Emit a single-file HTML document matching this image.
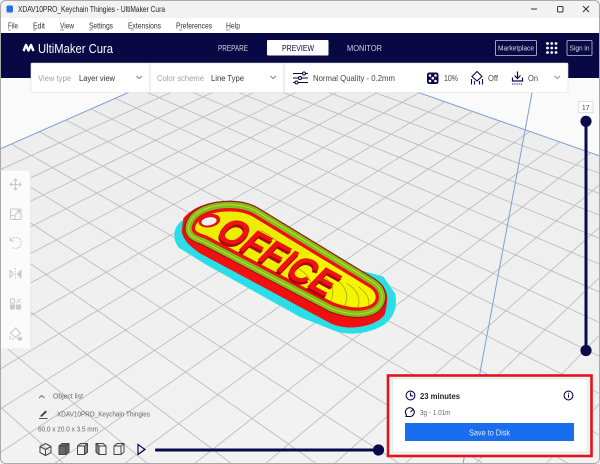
<!DOCTYPE html>
<html><head><meta charset="utf-8"><style>
html,body{margin:0;padding:0;width:600px;height:464px;overflow:hidden;background:#fff}
svg{display:block;overflow:hidden}
text{font-family:"Liberation Sans",sans-serif}
</style></head><body>
<svg xmlns="http://www.w3.org/2000/svg" width="600" height="464" viewBox="0 0 600 464">
<defs>
<clipPath id="bed"><polygon points="257,36 600,156 600,464 0,464 0,149"/></clipPath>
<clipPath id="inner"><path d="M135,115 C140,80 190,64 240,64 C265,64 285,68 305,78 L660,294 C685,312 680,335 660,345 C630,358 590,352 550,337 L170,137 C150,130 135,125 135,115 Z"/></clipPath>
<linearGradient id="bedg" x1="0" y1="0" x2="0" y2="1"><stop offset="0" stop-color="#ececec"/><stop offset="1" stop-color="#f2f2f2"/></linearGradient>
<pattern id="dots" width="7" height="7" patternUnits="userSpaceOnUse"><rect width="7" height="7" fill="#f5f500"/><circle cx="2" cy="2" r="1" fill="#b4b414"/><circle cx="5.5" cy="5.5" r="1" fill="#b4b414"/></pattern>
<pattern id="cy" width="8" height="8" patternUnits="userSpaceOnUse"><rect width="8" height="8" fill="#22dde6"/><circle cx="2" cy="2" r="1.2" fill="#8ceef0"/></pattern>
</defs>
<rect width="600" height="464" fill="#fff"/>
<!-- viewport -->
<rect x="0" y="78" width="600" height="386" fill="#fafafa"/>
<polygon points="257,36 600,156 600,464 0,464 0,149" fill="url(#bedg)"/>
<g clip-path="url(#bed)" stroke="#bcbcbc" stroke-width=".85" fill="none">
<g>
<line x1="-834" y1="-341" x2="1410" y2="464"/><line x1="-834" y1="-341" x2="1325" y2="464"/><line x1="-834" y1="-341" x2="1241" y2="464"/><line x1="-834" y1="-341" x2="1158" y2="464"/><line x1="-834" y1="-341" x2="1073" y2="464"/><line x1="-834" y1="-341" x2="989" y2="464"/><line x1="-834" y1="-341" x2="905" y2="464"/><line x1="-834" y1="-341" x2="821" y2="464"/><line x1="-834" y1="-341" x2="737" y2="464"/><line x1="-834" y1="-341" x2="653" y2="464"/><line x1="-834" y1="-341" x2="569" y2="464"/><line x1="-834" y1="-341" x2="484" y2="464"/><line x1="-834" y1="-341" x2="400" y2="464"/><line x1="-834" y1="-341" x2="317" y2="464"/><line x1="-834" y1="-341" x2="232" y2="464"/><line x1="-834" y1="-341" x2="148" y2="464"/><line x1="-834" y1="-341" x2="64" y2="464"/><line x1="-834" y1="-341" x2="-20" y2="464"/>
</g>
<g>
<line x1="1349" y1="-441" x2="-650" y2="464"/><line x1="1349" y1="-441" x2="-579" y2="464"/><line x1="1349" y1="-441" x2="-509" y2="464"/><line x1="1349" y1="-441" x2="-438" y2="464"/><line x1="1349" y1="-441" x2="-369" y2="464"/><line x1="1349" y1="-441" x2="-299" y2="464"/><line x1="1349" y1="-441" x2="-228" y2="464"/><line x1="1349" y1="-441" x2="-158" y2="464"/><line x1="1349" y1="-441" x2="-87" y2="464"/><line x1="1349" y1="-441" x2="-17" y2="464"/><line x1="1349" y1="-441" x2="54" y2="464"/><line x1="1349" y1="-441" x2="124" y2="464"/><line x1="1349" y1="-441" x2="194" y2="464"/><line x1="1349" y1="-441" x2="265" y2="464"/><line x1="1349" y1="-441" x2="334" y2="464"/><line x1="1349" y1="-441" x2="405" y2="464"/><line x1="1349" y1="-441" x2="475" y2="464"/><line x1="1349" y1="-441" x2="546" y2="464"/><line x1="1349" y1="-441" x2="616" y2="464"/>
</g>
</g>
<!-- blue edges -->
<g stroke="#7d9fd6" stroke-width="1" fill="none">
<line x1="0" y1="149" x2="257" y2="36"/>
<line x1="257" y1="36" x2="600" y2="156"/>
<line x1="540" y1="50" x2="463" y2="464"/>
</g>

<!-- model -->
<g transform="translate(150 190) scale(.33333)">
<path d="M95,92 C72,112 64,140 85,172 L165,222 L450,381 L560,425 C600,436 650,432 692,410 C730,390 745,350 735,310 L700,260 Z" fill="url(#cy)"/>
<path d="M100,85 C130,50 180,32 240,34 C270,36 290,42 310,50 L690,278 C710,295 715,320 710,345 L705,372 C690,397 640,415 590,412 C570,410 555,406 540,399 L150,190 C120,170 100,150 95,125 Z" fill="#f01010"/>
<g fill="none" stroke-linejoin="round">
<path d="M135,115 C140,80 190,64 240,64 C265,64 285,68 305,78 L660,294 C685,312 680,335 660,345 C630,358 590,352 550,337 L170,137 C150,130 135,125 135,115 Z" stroke="#a51010" stroke-width="64"/>
<path d="M135,115 C140,80 190,64 240,64 C265,64 285,68 305,78 L660,294 C685,312 680,335 660,345 C630,358 590,352 550,337 L170,137 C150,130 135,125 135,115 Z" stroke="#7fc020" stroke-width="57"/>
<path d="M135,115 C140,80 190,64 240,64 C265,64 285,68 305,78 L660,294 C685,312 680,335 660,345 C630,358 590,352 550,337 L170,137 C150,130 135,125 135,115 Z" stroke="#d6e020" stroke-width="42"/>
<path d="M135,115 C140,80 190,64 240,64 C265,64 285,68 305,78 L660,294 C685,312 680,335 660,345 C630,358 590,352 550,337 L170,137 C150,130 135,125 135,115 Z" stroke="#7fc020" stroke-width="37"/>
<path d="M135,115 C140,80 190,64 240,64 C265,64 285,68 305,78 L660,294 C685,312 680,335 660,345 C630,358 590,352 550,337 L170,137 C150,130 135,125 135,115 Z" stroke="#ee1010" stroke-width="20"/>
<path d="M135,115 C140,80 190,64 240,64 C265,64 285,68 305,78 L660,294 C685,312 680,335 660,345 C630,358 590,352 550,337 L170,137 C150,130 135,125 135,115 Z" fill="url(#dots)"/>
<g clip-path="url(#inner)">
<rect x="130" y="60" width="560" height="300" fill="none"/>
<path d="M480,190 L700,300 L700,370 L400,300 Z" fill="#f5f500"/>
<path d="M510,250 C550,275 560,310 535,345 M555,265 C590,290 600,320 580,355 M590,280 C625,300 635,330 620,360 M625,290 C655,312 665,335 650,360 M430,230 C470,245 490,270 480,305 M330,120 C370,140 400,165 395,190" stroke="#adad14" stroke-width="2.6"/>
</g>
</g>
<ellipse cx="178" cy="92" rx="33" ry="20" transform="rotate(-10 178 92)" fill="#e81010"/>
<ellipse cx="177" cy="94" rx="23" ry="12" transform="rotate(-10 177 94)" fill="#f0f0f0"/>
<text transform="matrix(.92 .5 -.82 .85 186 145)" font-size="100" font-weight="700" fill="#a80808" style="font-family:'Liberation Sans',sans-serif">OFFICE</text>
<text transform="matrix(.92 .5 -.82 .85 189 137)" font-size="100" font-weight="700" fill="#ee1212" style="font-family:'Liberation Sans',sans-serif">OFFICE</text>
</g>

<!-- title bar -->
<rect x="0" y="0" width="600" height="18" fill="#f3f2f2"/>
<rect x="0" y="18" width="600" height="15" fill="#ffffff"/>
<rect x="0" y="33" width="600" height="45" fill="#080844"/>
<rect x="6.5" y="5.5" width="6.5" height="7" rx="1.5" fill="#2a6fd6"/>
<text x="18" y="12" font-size="8.6" fill="#222" textLength="147" lengthAdjust="spacingAndGlyphs">XDAV10PRO_Keychain Thingies - UltiMaker Cura</text>
<g stroke="#333" fill="none" stroke-width="1">
<line x1="531" y1="9" x2="537" y2="9"/>
<rect x="557.5" y="6.5" width="5.5" height="5.5" rx="1"/>
<path d="M583 6 L589 12 M589 6 L583 12"/>
</g>
<!-- menu -->
<g font-size="8.4" fill="#333">
<text x="8" y="28.5" textLength="10" lengthAdjust="spacingAndGlyphs">File</text>
<text x="33" y="28.5" textLength="12" lengthAdjust="spacingAndGlyphs">Edit</text>
<text x="60" y="28.5" textLength="14" lengthAdjust="spacingAndGlyphs">View</text>
<text x="89" y="28.5" textLength="24" lengthAdjust="spacingAndGlyphs">Settings</text>
<text x="128" y="28.5" textLength="33" lengthAdjust="spacingAndGlyphs">Extensions</text>
<text x="176" y="28.5" textLength="36" lengthAdjust="spacingAndGlyphs">Preferences</text>
<text x="226" y="28.5" textLength="14" lengthAdjust="spacingAndGlyphs">Help</text>
</g>
<g stroke="#555" stroke-width=".6">
<line x1="8" y1="30" x2="11" y2="30"/><line x1="33" y1="30" x2="36" y2="30"/><line x1="60" y1="30" x2="64" y2="30"/><line x1="89" y1="30" x2="93" y2="30"/><line x1="131" y1="30" x2="134" y2="30"/><line x1="179" y1="30" x2="182" y2="30"/><line x1="226" y1="30" x2="230" y2="30"/>
</g>
<!-- header -->
<path d="M23.5 51 L26 45 L28.5 50.5 L31 45 L33.5 51" fill="none" stroke="#fff" stroke-width="2.4" stroke-linejoin="round"/>
<text x="38" y="53" font-size="13" fill="#fff" textLength="75" lengthAdjust="spacingAndGlyphs">UltiMaker Cura</text>
<text x="218" y="51" font-size="8" fill="#d4d4e2" textLength="30" lengthAdjust="spacingAndGlyphs">PREPARE</text>
<rect x="267" y="40" width="61.5" height="15.5" rx="1" fill="#fff"/>
<text x="282" y="51" font-size="8" fill="#080844" textLength="32" lengthAdjust="spacingAndGlyphs">PREVIEW</text>
<text x="347" y="51" font-size="8" fill="#d4d4e2" textLength="35" lengthAdjust="spacingAndGlyphs">MONITOR</text>
<rect x="495.5" y="40.5" width="41" height="15" rx="1" fill="none" stroke="#c8c8d8" stroke-width=".8"/>
<text x="498" y="50.5" font-size="7.5" fill="#dcdce8" textLength="36" lengthAdjust="spacingAndGlyphs">Marketplace</text>
<g fill="#fff">
<circle cx="547.5" cy="43.5" r="1.4"/><circle cx="551.7" cy="43.5" r="1.4"/><circle cx="556" cy="43.5" r="1.4"/>
<circle cx="547.5" cy="48" r="1.4"/><circle cx="551.7" cy="48" r="1.4"/><circle cx="556" cy="48" r="1.4"/>
<circle cx="547.5" cy="52.5" r="1.4"/><circle cx="551.7" cy="52.5" r="1.4"/><circle cx="556" cy="52.5" r="1.4"/>
</g>
<rect x="567" y="40.5" width="25" height="15" rx="1" fill="none" stroke="#c8c8d8" stroke-width=".8"/>
<text x="569.5" y="50.5" font-size="7.5" fill="#dcdce8" textLength="20" lengthAdjust="spacingAndGlyphs">Sign in</text>

<!-- toolbar -->
<rect x="31" y="63" width="537" height="29.5" rx="1" fill="#fff" stroke="#dcdcdc" stroke-width=".6"/>
<line x1="150" y1="63" x2="150" y2="92" stroke="#dedede"/>
<line x1="284" y1="63" x2="284" y2="92" stroke="#dedede"/>
<text x="38" y="81" font-size="8" fill="#a2a2a2" textLength="33" lengthAdjust="spacingAndGlyphs">View type</text>
<text x="79" y="81" font-size="8" fill="#333" textLength="36" lengthAdjust="spacingAndGlyphs">Layer view</text>
<path d="M136.5 76 L139.2 78.5 L142 76" fill="none" stroke="#777" stroke-width=".9"/>
<text x="157" y="81" font-size="8" fill="#a2a2a2" textLength="47" lengthAdjust="spacingAndGlyphs">Color scheme</text>
<text x="211" y="81" font-size="8" fill="#333" textLength="33" lengthAdjust="spacingAndGlyphs">Line Type</text>
<path d="M270.5 76 L273.2 78.5 L276 76" fill="none" stroke="#777" stroke-width=".9"/>
<g stroke="#080844" stroke-width="1" fill="#fff">
<line x1="293" y1="73.5" x2="308" y2="73.5"/><line x1="293" y1="78" x2="308" y2="78"/><line x1="293" y1="82.5" x2="308" y2="82.5"/>
<circle cx="304" cy="73.5" r="1.5"/><circle cx="300" cy="78" r="1.5"/><circle cx="296.5" cy="82.5" r="1.5"/>
</g>
<text x="313" y="81" font-size="8" fill="#444" textLength="82" lengthAdjust="spacingAndGlyphs">Normal Quality - 0.2mm</text>
<rect x="427" y="72.5" width="11.5" height="11.5" rx="2.2" fill="#0a0a4a"/>
<g fill="#fff"><circle cx="430" cy="75.5" r="1.3"/><circle cx="435.5" cy="75.5" r="1.3"/><circle cx="430" cy="81" r="1.3"/><circle cx="435.5" cy="81" r="1.3"/><circle cx="432.8" cy="78.2" r="1.3"/></g>
<text x="444" y="81" font-size="8" fill="#444" textLength="14" lengthAdjust="spacingAndGlyphs">10%</text>
<path d="M477 71.5 L482 76.5 L477 81 L472 76.5 Z" fill="none" stroke="#0a0a4a" stroke-width="1.1"/>
<path d="M471.5 79 V84.5 M474.5 81 V84.5 M479.5 81 V84.5 M482.5 79 V84.5" stroke="#0a0a4a" stroke-width="1.1" fill="none"/>
<text x="488" y="81" font-size="8" fill="#444" textLength="10" lengthAdjust="spacingAndGlyphs">Off</text>
<path d="M517.5 71.5 V78 M514.5 75.5 L517.5 78.5 L520.5 75.5" fill="none" stroke="#0a0a4a" stroke-width="1.2"/>
<path d="M512.5 77.5 V81 H522.5 V77.5" fill="none" stroke="#0a0a4a" stroke-width="1.2"/>
<line x1="512" y1="84" x2="523" y2="84" stroke="#0a0a4a" stroke-width="1" stroke-dasharray="1.2 1"/>
<text x="528" y="81" font-size="8" fill="#444" textLength="10" lengthAdjust="spacingAndGlyphs">On</text>
<path d="M554.5 76 L557.2 78.5 L560 76" fill="none" stroke="#888" stroke-width=".9"/>

<!-- layer slider -->
<rect x="578.5" y="101.5" width="14.5" height="11" fill="#fff" stroke="#d0d0d0" stroke-width=".7"/>
<text x="585.8" y="109.8" font-size="7" fill="#444" text-anchor="middle">17</text>
<rect x="584.5" y="121" width="3" height="229" fill="#0a0a4a"/>
<circle cx="586" cy="121.3" r="5.6" fill="#0a0a4a"/>
<circle cx="586" cy="350.5" r="5.6" fill="#0a0a4a"/>

<!-- left toolbar -->
<rect x="0" y="170" width="30.5" height="179" rx="1" fill="#fbfbfb" stroke="#e2e2e2" stroke-width=".6"/>
<g fill="none" stroke="#c8c8d0" stroke-width="1.1">
<path d="M15.5 179 V190 M10 184.5 H21 M13.5 181 L15.5 179 L17.5 181 M13.5 188 L15.5 190 L17.5 188 M12 182.5 L10 184.5 L12 186.5 M19 182.5 L21 184.5 L19 186.5"/>
<rect x="10.5" y="209" width="10.5" height="10.5" rx="1"/>
<path d="M10.5 215.5 H15 V219.5 M15 215 L19.5 210.5 M16.5 210.5 H19.5 V213.5"/>
<path d="M11 240 A5.5 5.5 0 1 1 12 247" stroke-dasharray="2 1"/>
<path d="M10.5 237.5 V241 H14"/>
<path d="M15.5 268 V280" stroke-dasharray="1.5 1.5"/>
<path d="M10 270.5 L13.5 274 L10 277.5 Z"/>
<path d="M21 270.5 L17.5 274 L21 277.5 Z" fill="#c8c8d0"/>
<rect x="10.5" y="299" width="4" height="4"/>
<rect x="10.5" y="305" width="4" height="4" fill="#c8c8d0"/>
<rect x="16.5" y="305" width="4" height="4" fill="#c8c8d0"/>
<path d="M16.5 303 L20.5 299 M17 299.5 H18 M20 302.5 H21"/>
<path d="M15.5 328 L20.5 333 L15.5 337.5 L10.5 333 Z"/>
<path d="M10 336 V340 M13 338 V340 M18 338 V340" />
<rect x="18.5" y="337.5" width="3" height="2.5" fill="#c8c8d0"/>
</g>

<!-- object list -->
<path d="M39 398 L41.7 395.5 L44.5 398" fill="none" stroke="#666" stroke-width=".9"/>
<text x="53" y="398.7" font-size="7.5" fill="#666" textLength="30" lengthAdjust="spacingAndGlyphs">Object list</text>
<path d="M40 416 L45.5 410.5 L47 412 L41.5 417 Z" fill="#444"/>
<line x1="39" y1="418.5" x2="47.5" y2="418.5" stroke="#444" stroke-width=".9"/>
<text x="57" y="416.5" font-size="7.5" fill="#666" textLength="93" lengthAdjust="spacingAndGlyphs">XDAV10PRO_Keychain Thingies</text>
<text x="38" y="431.5" font-size="7.5" fill="#666" textLength="60" lengthAdjust="spacingAndGlyphs">60.0 x 20.0 x 3.5 mm</text>
<g stroke="#444" stroke-width="1" fill="none" stroke-linejoin="round">
<path d="M45.5 443.5 L51 446.5 V452.5 L45.5 455.5 L40 452.5 V446.5 Z M40 446.5 L45.5 449.5 L51 446.5 M45.5 449.5 V455.5"/>
<path d="M59 446 L62 443.5 H69 V452 L66 454.5 H59 Z" fill="#666"/>
<path d="M59 446 H66 V454.5 M66 446 L69 443.5"/>
<path d="M77.5 446 L80.5 443.5 H87.5 V452 L84.5 454.5 H77.5 Z M77.5 446 H84.5 V454.5 M84.5 446 L87.5 443.5" />
<path d="M84.5 446 L87.5 443.5 V452 L84.5 454.5 Z" fill="#888"/>
<path d="M96 443.5 H103 L106 446 V454.5 H99 L96 452 Z M99 454.5 V446 H106 M96 443.5 L99 446"/>
<path d="M96 443.5 L99 446 V454.5 L96 452 Z" fill="#888"/>
<path d="M114 446 L117 443.5 H124 V452 L121 454.5 H114 Z M114 446 H121 V454.5 M121 446 L124 443.5"/>
</g>
<path d="M138 444.5 L145 449.5 L138 454.5 Z" fill="none" stroke="#0a0a4a" stroke-width="1.2"/>
<rect x="155" y="448.5" width="223" height="3" rx="1" fill="#0a0a4a"/>
<circle cx="378.5" cy="450" r="5.6" fill="#0a0a4a"/>

<!-- print panel -->
<rect x="388" y="375.5" width="203.5" height="80.5" fill="#f2f2f2" stroke="#e0141e" stroke-width="2.6"/>
<rect x="392.5" y="379" width="194.5" height="73" fill="#fff" stroke="#dedede" stroke-width=".6"/>
<g fill="none" stroke="#0a0a4a" stroke-width="1.1">
<circle cx="410.5" cy="395.5" r="4.4"/><path d="M410.5 392.5 V395.8 H413"/>
<circle cx="568.5" cy="395.5" r="4.4"/>
<path d="M406.5 415 A4.4 4.4 0 1 1 410.5 416.5 H406 Z M410.5 412 L413 409.5"/>
</g>
<rect x="568" y="394.5" width="1" height="3.2" fill="#0a0a4a"/><rect x="568" y="392.8" width="1" height="1" fill="#0a0a4a"/>
<text x="420" y="399" font-size="8.3" font-weight="700" fill="#222" textLength="40" lengthAdjust="spacingAndGlyphs">23 minutes</text>
<text x="420" y="415" font-size="7.5" fill="#666" textLength="30.5" lengthAdjust="spacingAndGlyphs">3g - 1.01m</text>
<rect x="405" y="423" width="169" height="18" fill="#196ef0"/>
<text x="469" y="435.3" font-size="8.2" fill="#dfeaff" textLength="41" lengthAdjust="spacingAndGlyphs">Save to Disk</text>

<!-- window frame -->
<rect x=".5" y=".5" width="599" height="463" rx="5" fill="none" stroke="#a9a9a9" stroke-width="1"/>
</svg>
</body></html>
